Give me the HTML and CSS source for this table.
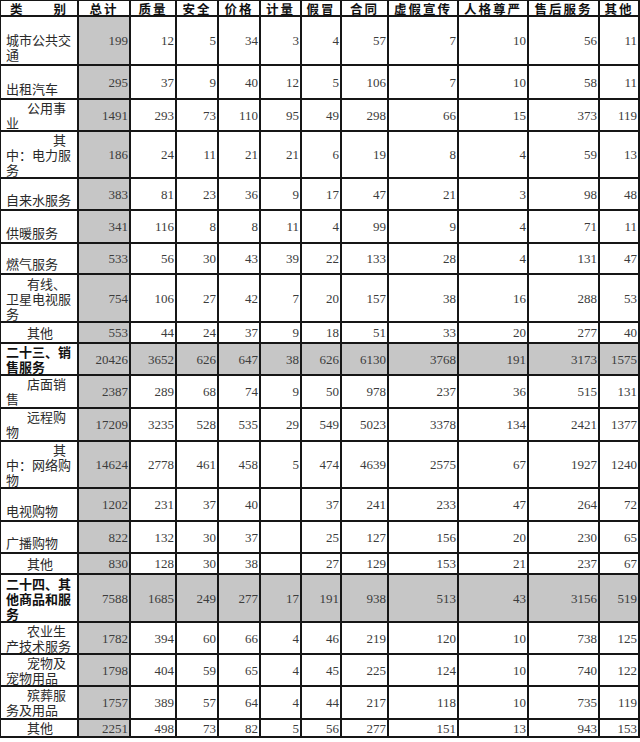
FILE: index.html
```html
<!DOCTYPE html>
<html lang="zh">
<head>
<meta charset="utf-8">
<link rel="stylesheet" href="styles.css">
</head>
<body>
<table class="tbl">
<colgroup>
<col class="w77"><col class="w52"><col class="w46"><col class="w42"><col class="w42"><col class="w41"><col class="w40"><col class="w47"><col class="w70"><col class="w70"><col class="w71"><col class="w40">
</colgroup>
<thead>
<tr class="h17"><th>类　　别</th><th>总计</th><th>质量</th><th>安全</th><th>价格</th><th>计量</th><th>假冒</th><th>合同</th><th>虚假宣传</th><th>人格尊严</th><th>售后服务</th><th>其他</th></tr>
</thead>
<tbody>
<tr class="h49"><td class="c p">城市公共交通</td><td class="t">199</td><td>12</td><td>5</td><td>34</td><td>3</td><td>4</td><td>57</td><td>7</td><td>10</td><td>56</td><td>11</td></tr>
<tr class="h34"><td class="c p">出租汽车</td><td class="t">295</td><td>37</td><td>9</td><td>40</td><td>12</td><td>5</td><td>106</td><td>7</td><td>10</td><td>58</td><td>11</td></tr>
<tr class="h32"><td class="c i2">公用事业</td><td class="t">1491</td><td>293</td><td>73</td><td>110</td><td>95</td><td>49</td><td>298</td><td>66</td><td>15</td><td>373</td><td>119</td></tr>
<tr class="h47"><td class="c i4">其中：电力服务</td><td class="t">186</td><td>24</td><td>11</td><td>21</td><td>21</td><td>6</td><td>19</td><td>8</td><td>4</td><td>59</td><td>13</td></tr>
<tr class="h32"><td class="c p">自来水服务</td><td class="t">383</td><td>81</td><td>23</td><td>36</td><td>9</td><td>17</td><td>47</td><td>21</td><td>3</td><td>98</td><td>48</td></tr>
<tr class="h33"><td class="c p">供暖服务</td><td class="t">341</td><td>116</td><td>8</td><td>8</td><td>11</td><td>4</td><td>99</td><td>9</td><td>4</td><td>71</td><td>11</td></tr>
<tr class="h31"><td class="c p">燃气服务</td><td class="t">533</td><td>56</td><td>30</td><td>43</td><td>39</td><td>22</td><td>133</td><td>28</td><td>4</td><td>131</td><td>47</td></tr>
<tr class="h48"><td class="c i2">有线、卫星电视服务</td><td class="t">754</td><td>106</td><td>27</td><td>42</td><td>7</td><td>20</td><td>157</td><td>38</td><td>16</td><td>288</td><td>53</td></tr>
<tr class="h21"><td class="c i2 p">其他</td><td class="t">553</td><td>44</td><td>24</td><td>37</td><td>9</td><td>18</td><td>51</td><td>33</td><td>20</td><td>277</td><td>40</td></tr>
<tr class="h32 g"><td class="c b">二十三、销售服务</td><td class="t">20426</td><td>3652</td><td>626</td><td>647</td><td>38</td><td>626</td><td>6130</td><td>3768</td><td>191</td><td>3173</td><td>1575</td></tr>
<tr class="h33"><td class="c i2 p1">店面销售</td><td class="t">2387</td><td>289</td><td>68</td><td>74</td><td>9</td><td>50</td><td>978</td><td>237</td><td>36</td><td>515</td><td>131</td></tr>
<tr class="h33"><td class="c i2 p1">远程购物</td><td class="t">17209</td><td>3235</td><td>528</td><td>535</td><td>29</td><td>549</td><td>5023</td><td>3378</td><td>134</td><td>2421</td><td>1377</td></tr>
<tr class="h47"><td class="c i4">其中：网络购物</td><td class="t">14624</td><td>2778</td><td>461</td><td>458</td><td>5</td><td>474</td><td>4639</td><td>2575</td><td>67</td><td>1927</td><td>1240</td></tr>
<tr class="h33"><td class="c p">电视购物</td><td class="t">1202</td><td>231</td><td>37</td><td>40</td><td></td><td>37</td><td>241</td><td>233</td><td>47</td><td>264</td><td>72</td></tr>
<tr class="h32"><td class="c p">广播购物</td><td class="t">822</td><td>132</td><td>30</td><td>37</td><td></td><td>25</td><td>127</td><td>156</td><td>20</td><td>230</td><td>65</td></tr>
<tr class="h21"><td class="c i2 p">其他</td><td class="t">830</td><td>128</td><td>30</td><td>38</td><td></td><td>27</td><td>129</td><td>153</td><td>21</td><td>237</td><td>67</td></tr>
<tr class="h48 g"><td class="c b">二十四、其他商品和服务</td><td class="t">7588</td><td>1685</td><td>249</td><td>277</td><td>17</td><td>191</td><td>938</td><td>513</td><td>43</td><td>3156</td><td>519</td></tr>
<tr class="h32"><td class="c i2">农业生产技术服务</td><td class="t">1782</td><td>394</td><td>60</td><td>66</td><td>4</td><td>46</td><td>219</td><td>120</td><td>10</td><td>738</td><td>125</td></tr>
<tr class="h32"><td class="c i2">宠物及宠物用品</td><td class="t">1798</td><td>404</td><td>59</td><td>65</td><td>4</td><td>45</td><td>225</td><td>124</td><td>10</td><td>740</td><td>122</td></tr>
<tr class="h33"><td class="c i2 p1">殡葬服务及用品</td><td class="t">1757</td><td>389</td><td>57</td><td>64</td><td>4</td><td>44</td><td>217</td><td>118</td><td>10</td><td>735</td><td>119</td></tr>
<tr class="h19"><td class="c i2 p1">其他</td><td class="t">2251</td><td>498</td><td>73</td><td>82</td><td>5</td><td>56</td><td>277</td><td>151</td><td>13</td><td>943</td><td>153</td></tr>
</tbody>
</table>
</body>
</html>
```
FILE: styles.css
```css
html, body {
  margin: 0;
  padding: 0;
  background: #ffffff;
}
.tbl {
  border-collapse: collapse;
  table-layout: fixed;
  width: 640px;
  margin: -1px 0 0 -1px;
}
.w77 { width: 78px; }
.w52 { width: 52px; }
.w46 { width: 46px; }
.w42 { width: 42px; }
.w41 { width: 41px; }
.w40 { width: 40px; }
.w47 { width: 47px; }
.w70 { width: 70px; }
.w71 { width: 71px; }
.tbl th, .tbl td {
  border: 2px solid #161616;
  padding: 0;
  overflow: hidden;
}
.tbl th {
  font-family: "Noto Sans CJK SC", sans-serif;
  font-weight: 700;
  font-size: 12.5px;
  letter-spacing: 2px;
  line-height: 13px;
  color: #111111;
  text-align: center;
  vertical-align: middle;
  white-space: nowrap;
}
.tbl td {
  font-family: "Liberation Serif", "Times New Roman", serif;
  font-size: 13px;
  color: #3c3c3c;
  text-align: right;
  vertical-align: middle;
  padding-right: 1px;
  line-height: 15px;
}
.tbl td.c {
  font-family: "Noto Sans CJK SC", sans-serif;
  font-size: 13px;
  line-height: 15px;
  text-align: left;
  vertical-align: bottom;
  padding: 0 2px 0 5px;
  color: #2a2a2a;
  word-break: break-all;
}
.tbl td.p { padding-bottom: 2px; }
.tbl td.p1 { padding-bottom: 1px; }
.tbl td.i2 { text-indent: 21px; }
.tbl td.i4 { text-indent: 47px; }
.tbl td.b { font-weight: 700; color: #111111; }
.tbl td.t { background: #c6c6c6; }
.g td { background: #c6c6c6; }
.g td.c { background: #ffffff; }
.h17 { height: 16px; }
.h19 { height: 18px; }
.h21 { height: 21px; }
.h31 { height: 31px; }
.h32 { height: 32px; }
.h33 { height: 33px; }
.h34 { height: 34px; }
.h47 { height: 47px; }
.h48 { height: 48px; }
.h49 { height: 49px; }
```
